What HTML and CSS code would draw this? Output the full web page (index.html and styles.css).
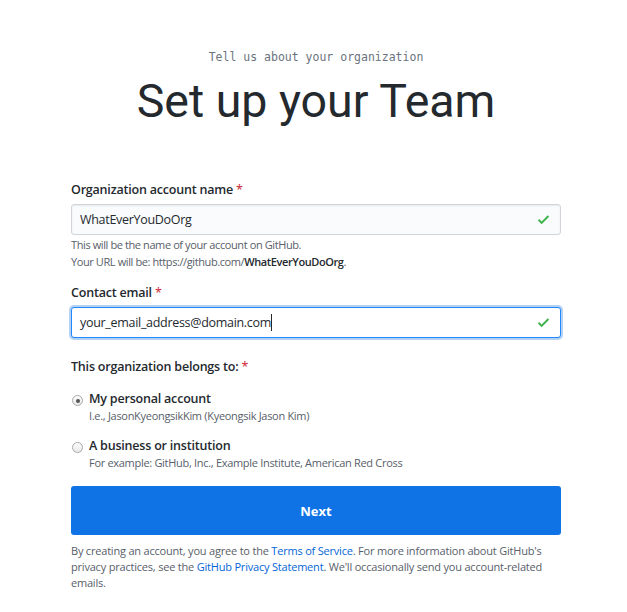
FILE: index.html
```html
<!DOCTYPE html>
<html lang="en">
<head>
  <meta charset="UTF-8">
  <title>Set up your Team</title>
  <link rel="stylesheet" href="styles.css">
</head>
<body>
  <div class="page">
    <div class="header">
      <p class="eyebrow">Tell us about your organization</p>
      <h1 class="title">Set up your Team</h1>
    </div>

    <form class="form">
      <div class="field has-note">
        <label class="label">Organization account name <span class="req">*</span></label>
        <div class="input">
          <span class="value">WhatEverYouDoOrg</span>
          <svg class="check" width="15" height="15" viewBox="0 0 12 16"><path d="M12 5l-8 8-4-4 1.5-1.5L4 10l6.5-6.5L12 5z" fill="#3fb34f"/></svg>
        </div>
        <p class="note">This will be the name of your account on GitHub.<br>Your URL will be: https://github.com/<strong>WhatEverYouDoOrg</strong>.</p>
      </div>

      <div class="field">
        <label class="label">Contact email <span class="req">*</span></label>
        <div class="input focused">
          <span class="value">your_email_address@domain.com<span class="caret"></span></span>
          <svg class="check" width="15" height="15" viewBox="0 0 12 16"><path d="M12 5l-8 8-4-4 1.5-1.5L4 10l6.5-6.5L12 5z" fill="#3fb34f"/></svg>
        </div>
      </div>

      <div class="field">
        <label class="label">This organization belongs to: <span class="req">*</span></label>
        <div class="options">
          <div class="option">
            <span class="radio checked"></span>
            <div>
              <div class="option-title">My personal account</div>
              <div class="option-note">I.e., JasonKyeongsikKim (Kyeongsik Jason Kim)</div>
            </div>
          </div>
          <div class="option">
            <span class="radio"></span>
            <div>
              <div class="option-title">A business or institution</div>
              <div class="option-note">For example: GitHub, Inc., Example Institute, American Red Cross</div>
            </div>
          </div>
        </div>
      </div>

      <button type="button" class="btn">Next</button>

      <p class="legal">By creating an account, you agree to the <a href="#">Terms of Service</a>. For more information about GitHub's privacy practices, see the <a href="#">GitHub Privacy Statement</a>. We'll occasionally send you account-related emails.</p>
    </form>
  </div>
</body>
</html>
```

FILE: styles.css
```css
body {
  margin: 0;
  background: #fff;
  color: #24292e;
  font-family: "Segoe UI", "Open Sans", "Noto Sans", sans-serif;
}

.page {
  width: 490px;
  margin: 0 auto;
  padding-left: 5px;
}

.header {
  text-align: center;
  padding-top: 50px;
}

.eyebrow {
  margin: 0;
  font-family: "DejaVu Sans Mono", "Liberation Mono", monospace;
  font-size: 11.5px;
  color: #6a737d;
}

.title {
  margin: 9px 0 0;
  font-family: Roboto, "Liberation Sans", sans-serif;
  font-size: 46.5px;
  font-weight: 400;
  line-height: 56px;
  color: #24292e;
}

.form {
  margin-top: 51px;
}

.field {
  margin-bottom: 19px;
}

.field.has-note {
  margin-bottom: 13px;
}

.label {
  display: block;
  font-size: 12.5px;
  font-weight: 600;
  letter-spacing: -0.2px;
  line-height: 20px;
  margin-bottom: 4px;
}

.req {
  color: #cb2431;
  font-weight: 400;
}

.input {
  display: flex;
  align-items: center;
  justify-content: space-between;
  height: 29px;
  padding: 0 8px;
  border: 1px solid #d1d5da;
  border-radius: 3px;
  background: #fafbfc;
  box-shadow: inset 0 1px 2px rgba(27, 31, 35, 0.075);
  font-size: 12.5px;
  letter-spacing: -0.3px;
}

.input.focused {
  background: #fff;
  border-color: #2188ff;
  box-shadow: 0 0 0 2px rgba(3, 102, 214, 0.3);
}

.caret {
  display: inline-block;
  width: 1px;
  height: 17px;
  background: #24292e;
  vertical-align: -4px;
}

.check {
  margin-right: 1px;
}

.note {
  margin: 1px 0 0;
  font-size: 11px;
  letter-spacing: -0.4px;
  line-height: 17px;
  color: #586069;
}

.note strong {
  color: #24292e;
  font-weight: 600;
}

.options {
  margin-top: 13px;
}

.option {
  display: flex;
  align-items: flex-start;
  gap: 6px;
  margin-bottom: 13px;
}

.radio {
  flex: none;
  width: 9px;
  height: 9px;
  margin: 5px 0 0 1px;
  border: 1px solid #aaa;
  border-radius: 50%;
  background: linear-gradient(#fdfdfd, #e8e8e8);
  position: relative;
}

.radio.checked::after {
  content: "";
  position: absolute;
  left: 2.5px;
  top: 2.5px;
  width: 4px;
  height: 4px;
  border-radius: 50%;
  background: #555;
}

.option-title {
  font-size: 12.5px;
  font-weight: 600;
  letter-spacing: -0.2px;
  line-height: 18px;
}

.option-note {
  font-size: 11px;
  letter-spacing: -0.3px;
  line-height: 16px;
  color: #586069;
}

.btn {
  display: block;
  width: 100%;
  height: 49px;
  margin-top: -4px;
  border: none;
  border-radius: 3px;
  background: #0f73e6;
  color: #fff;
  font-family: inherit;
  font-size: 13px;
  font-weight: 700;
  cursor: pointer;
}

.legal {
  margin: 8px 0 0;
  padding-right: 8px;
  font-size: 11px;
  letter-spacing: -0.2px;
  line-height: 16px;
  color: #586069;
}

.legal a {
  color: #0366d6;
  text-decoration: none;
}
```
